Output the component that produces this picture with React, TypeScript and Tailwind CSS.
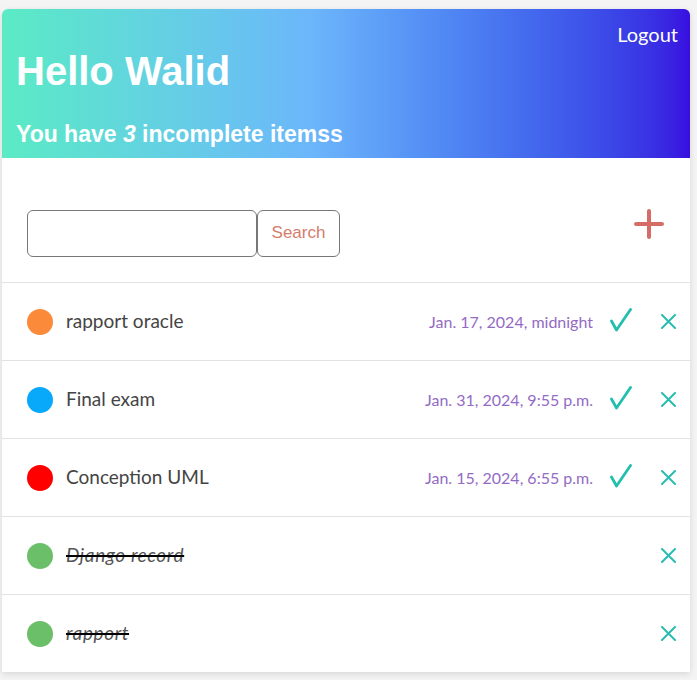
import React from "react";

type Item = { title: string; color: string; date?: string; done: boolean };

const items: Item[] = [
  { title: "rapport oracle", color: "#fb8a3a", date: "Jan. 17, 2024, midnight", done: false },
  { title: "Final exam", color: "#08a9fb", date: "Jan. 31, 2024, 9:55 p.m.", done: false },
  { title: "Conception UML", color: "#ff0000", date: "Jan. 15, 2024, 6:55 p.m.", done: false },
  { title: "Django record", color: "#6cbf69", done: true },
  { title: "rapport", color: "#6cbf69", done: true },
];

function Check() {
  return (
    <svg width="22" height="24" viewBox="0 0 22 24" fill="none">
      <path d="M1.5 13 L6.5 22 L20.5 1.5" stroke="#22bfae" strokeWidth="2.8" strokeLinecap="round" strokeLinejoin="round" />
    </svg>
  );
}

function Cross() {
  return (
    <svg width="15" height="15" viewBox="0 0 15 15" fill="none">
      <path d="M1 1 L14 14 M14 1 L1 14" stroke="#2abcb0" strokeWidth="2" strokeLinecap="round" />
    </svg>
  );
}

function Plus() {
  return (
    <svg width="30" height="30" viewBox="0 0 30 30" fill="none">
      <path d="M15 2 V28 M2 15 H28" stroke="#d66c66" strokeWidth="4" strokeLinecap="round" />
    </svg>
  );
}

export default function App() {
  return (
    <div className="min-h-[680px] w-[697px] bg-[#f4f4f4] pt-[9px] pl-[2px]">
      <div className="w-[688px] bg-white rounded-t-[6px] shadow-[0_2px_6px_rgba(0,0,0,0.12)]">
        <div className="rounded-t-[6px] bg-gradient-to-r from-[#5aebc4] via-[#6cb6fb] via-45% to-[#380de0] px-[14px] pt-[13px] pb-[11px] text-white">
          <div className="text-right text-[20px] leading-[24px] font-['Lato',sans-serif]">
            <span className="mr-[-2px]">Logout</span>
          </div>
          <h1 className="mt-[2px] text-[40px] leading-[46px] font-bold font-['Liberation_Sans',Arial,sans-serif]">
            Hello Walid
          </h1>
          <h3 className="mt-[27px] text-[23px] leading-[26px] font-bold font-['Liberation_Sans',Arial,sans-serif]">
            You have <i>3</i> incomplete itemss
          </h3>
        </div>

        <div className="flex items-center justify-between pl-[25px] pr-[26px] pt-[51px] pb-[25px]">
          <div className="flex">
            <input
              type="text"
              className="h-[47px] w-[230px] rounded-[6px] border border-[#777] bg-white outline-none"
            />
            <button className="h-[47px] w-[83px] rounded-[6px] border border-[#777] bg-white text-[17px] text-[#d47d6c] font-['Liberation_Sans',Arial,sans-serif]">
              Search
            </button>
          </div>
          <div className="mb-[18px]">
            <Plus />
          </div>
        </div>

        {items.map((it, i) => (
          <div
            key={i}
            className="flex h-[78px] items-center border-t border-[#e2e2e2] pl-[25px] pr-[14px] font-['Lato',sans-serif]"
          >
            <div className="h-[26px] w-[26px] shrink-0 rounded-full" style={{ backgroundColor: it.color }} />
            <div
              className={
                it.done
                  ? "ml-[13px] text-[19px] italic tracking-[0.6px] text-[#555] line-through decoration-black decoration-[2px]"
                  : "ml-[13px] text-[19px] text-[#444]"
              }
            >
              {it.title}
            </div>
            <div className="flex-1" />
            {it.date && (
              <>
                <div className="text-[16px] text-[#936bc4]">{it.date}</div>
                <div className="ml-[17px] mb-[4px] flex">
                  <Check />
                </div>
              </>
            )}
            <div className="ml-[29px] flex">
              <Cross />
            </div>
          </div>
        ))}
      </div>
    </div>
  );
}
